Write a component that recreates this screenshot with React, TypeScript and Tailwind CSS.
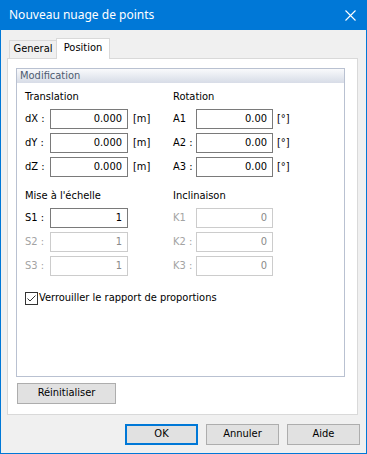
import React from 'react';

const font = "font-['Tahoma','DejaVu_Sans_Condensed','Noto_Sans',sans-serif]";

type Field = { label: string; value: string; disabled?: boolean };

const translation: Field[] = [
  { label: 'dX :', value: '0.000' },
  { label: 'dY :', value: '0.000' },
  { label: 'dZ :', value: '0.000' },
];

const rotation: Field[] = [
  { label: 'A1', value: '0.00' },
  { label: 'A2 :', value: '0.00' },
  { label: 'A3 :', value: '0.00' },
];

const scale: Field[] = [
  { label: 'S1 :', value: '1' },
  { label: 'S2 :', value: '1', disabled: true },
  { label: 'S3 :', value: '1', disabled: true },
];

const tilt: Field[] = [
  { label: 'K1', value: '0', disabled: true },
  { label: 'K2 :', value: '0', disabled: true },
  { label: 'K3 :', value: '0', disabled: true },
];

const FieldRow: React.FC<{ f: Field; left: boolean; unit?: string }> = ({ f, left, unit }) => (
  <div className="flex items-center h-[20px]">
    <span className={`${left ? 'w-[25px]' : 'w-[23px]'} ${f.disabled ? 'text-[#a3a3a3]' : 'text-black'}`}>{f.label}</span>
    <div
      className={`${left ? 'w-[78px]' : 'w-[77px]'} h-[20px] bg-white border flex items-center justify-end pr-[5px] ${
        f.disabled ? 'border-[#cccccc] text-[#8a8a8a]' : 'border-[#7a7a7a] text-black'
      }`}
    >
      {f.value}
    </div>
    {unit && <span className={left ? 'ml-[5px]' : 'ml-[4px]'}>{unit}</span>}
  </div>
);

const Section: React.FC<{ title: string; fields: Field[]; left: boolean; unit?: string }> = ({ title, fields, left, unit }) => (
  <div className="flex flex-col">
    <div className="h-[14px] leading-[14px] mb-[5px]">{title}</div>
    <div className="flex flex-col gap-[4px]">
      {fields.map((f) => (
        <FieldRow key={f.label} f={f} left={left} unit={unit} />
      ))}
    </div>
  </div>
);

const Button: React.FC<{ label: string; primary?: boolean; w: string }> = ({ label, primary, w }) => (
  <div
    className={`${w} h-[21px] bg-[#e1e1e1] flex items-center justify-center text-black ${
      primary ? 'border-2 border-[#0078d7]' : 'border border-[#adadad]'
    }`}
  >
    {label}
  </div>
);

export default function App() {
  return (
    <div className={`w-[367px] h-[454px] bg-[#f0f0f0] border border-t-0 border-[#0078d7] flex flex-col text-[11px] text-black ${font}`}>
      {/* Title bar */}
      <div className="h-[30px] bg-[#0078d7] flex items-center justify-between pl-[8px] pr-[8px] shrink-0">
        <span className="text-white text-[12px] font-['Noto_Sans',sans-serif]">Nouveau nuage de points</span>
        <svg width="11" height="11" viewBox="0 0 11 11" className="mr-[2px]">
          <path d="M0.5 0.5 L10.5 10.5 M10.5 0.5 L0.5 10.5" stroke="#ffffff" strokeWidth="1.1" />
        </svg>
      </div>

      <div className="flex flex-col pl-[6px]">
        {/* Tabs */}
        <div className="flex items-end h-[20px] mt-[8px] pl-[2px]">
          <div className="w-[47px] h-[18px] border border-r-0 border-b-0 border-[#d9d9d9] bg-[#f0f0f0] flex items-center justify-center">
            General
          </div>
          <div className="relative z-10 w-[54px] h-[21px] -mb-px border border-b-0 border-[#d9d9d9] bg-white flex items-center justify-center pb-[2px]">
            Position
          </div>
        </div>

        {/* Tab panel */}
        <div className="w-[351px] h-[357px] border border-[#d9d9d9] bg-white pt-[9px] pl-[8px] flex flex-col">
          <div className="w-[329px] h-[309px] border border-[#b9c1d1] flex flex-col">
            <div className="h-[14px] leading-[14px] pl-[3px] text-[#4d5b70] bg-gradient-to-b from-[#f9fafc] to-[#d7dce7]">
              Modification
            </div>
            <div className="flex flex-col pl-[8px] pt-[7px]">
              <div className="flex">
                <div className="w-[148px]">
                  <Section title="Translation" fields={translation} left unit="[m]" />
                </div>
                <Section title="Rotation" fields={rotation} left={false} unit="[°]" />
              </div>
              <div className="flex mt-[12px]">
                <div className="w-[148px]">
                  <Section title="Mise à l'échelle" fields={scale} left />
                </div>
                <Section title="Inclinaison" fields={tilt} left={false} />
              </div>
              <div className="flex items-center mt-[16px] h-[13px]">
                <div className="w-[13px] h-[13px] border border-[#333333] bg-white flex items-center justify-center">
                  <svg width="11" height="11" viewBox="0 0 11 11">
                    <path d="M1.5 5.5 L4 8 L9.5 2.5" fill="none" stroke="#333333" strokeWidth="1" />
                  </svg>
                </div>
                <span className="ml-[1px]">Verrouiller le rapport de proportions</span>
              </div>
            </div>
          </div>
          <div className="mt-[6px] ml-[1px]">
            <Button label="Réinitialiser" w="w-[99px]" />
          </div>
        </div>

        {/* Dialog buttons */}
        <div className="flex justify-end gap-[8px] mt-[9px] pr-[6px]">
          <Button label="OK" primary w="w-[73px]" />
          <Button label="Annuler" w="w-[73px]" />
          <Button label="Aide" w="w-[73px]" />
        </div>
      </div>
    </div>
  );
}
